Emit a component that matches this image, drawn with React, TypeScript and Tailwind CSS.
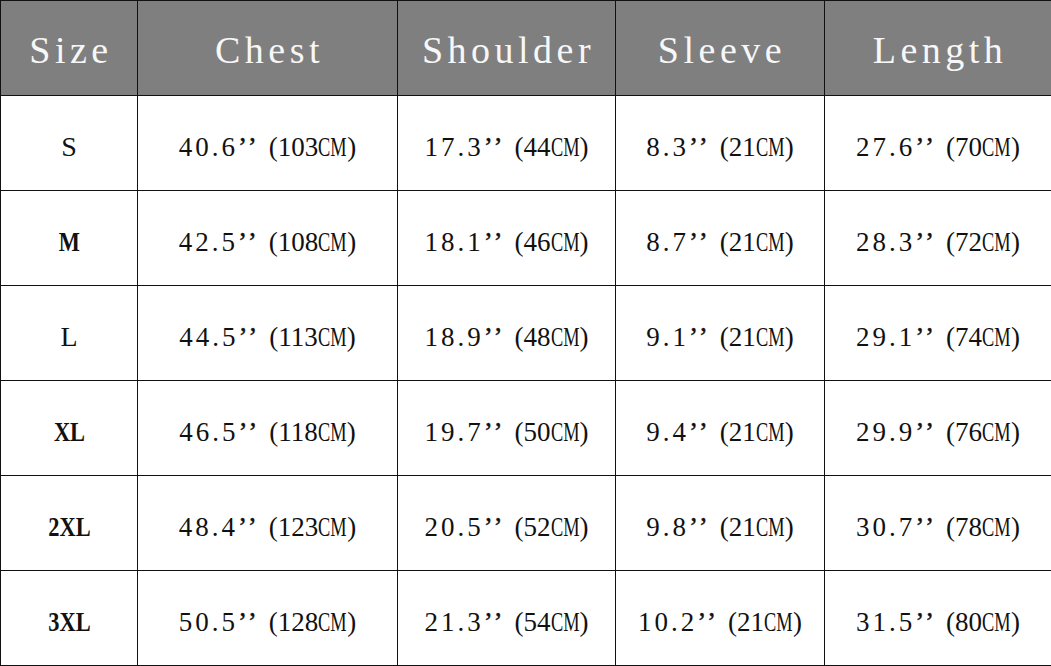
import React from 'react';

type Row = {
  size: string;
  bold: boolean;
  chest: [string, string];
  shoulder: [string, string];
  sleeve: [string, string];
  length: [string, string];
};

const ROWS: Row[] = [
  { size: 'S', bold: false, chest: ['40.6', '103'], shoulder: ['17.3', '44'], sleeve: ['8.3', '21'], length: ['27.6', '70'] },
  { size: 'M', bold: true, chest: ['42.5', '108'], shoulder: ['18.1', '46'], sleeve: ['8.7', '21'], length: ['28.3', '72'] },
  { size: 'L', bold: false, chest: ['44.5', '113'], shoulder: ['18.9', '48'], sleeve: ['9.1', '21'], length: ['29.1', '74'] },
  { size: 'XL', bold: true, chest: ['46.5', '118'], shoulder: ['19.7', '50'], sleeve: ['9.4', '21'], length: ['29.9', '76'] },
  { size: '2XL', bold: true, chest: ['48.4', '123'], shoulder: ['20.5', '52'], sleeve: ['9.8', '21'], length: ['30.7', '78'] },
  { size: '3XL', bold: true, chest: ['50.5', '128'], shoulder: ['21.3', '54'], sleeve: ['10.2', '21'], length: ['31.5', '80'] },
];

const HEADERS = ['Size', 'Chest', 'Shoulder', 'Sleeve', 'Length'];

// valeur "40.6’’(103CM)" façon police chinoise à chasse fixe
function Measure({ value }: { value: [string, string] }) {
  const [inch, cm] = value;
  return (
    <span className="whitespace-nowrap">
      <span className="tracking-[3px]">{inch}</span>
      <span className="tracking-[3px] [-webkit-text-stroke:0.4px]">’’</span>
      <span className="ml-[9px]">({cm}</span>
      <span className="inline-block w-[29px] origin-left scale-x-[0.68] text-left">CM</span>
      <span>)</span>
    </span>
  );
}

export default function App() {
  return (
    <div className="w-[1051px] h-[666px] bg-white" style={{ fontFamily: '"Liberation Serif", "Times New Roman", serif' }}>
      <table className="w-[1051px] table-fixed border-collapse">
        <colgroup>
          <col className="w-[137px]" />
          <col className="w-[260px]" />
          <col className="w-[218px]" />
          <col className="w-[209px]" />
          <col className="w-[227px]" />
        </colgroup>
        <thead>
          <tr className="h-[95px] bg-[#7f7f7f]">
            {HEADERS.map((h) => (
              <th
                key={h}
                className="border border-[#111] p-0 pt-[4px] pl-[4px] text-center align-middle text-[38px] font-normal tracking-[4.5px] text-[#f7f7f7]"
              >
                {h}
              </th>
            ))}
          </tr>
        </thead>
        <tbody>
          {ROWS.map((r) => (
            <tr key={r.size} className="h-[95px]">
              <td className="border border-[#111] p-0 pt-[8px] text-center align-middle text-[28px] text-[#111]">
                {r.bold ? (
                  <span className="inline-block scale-x-[0.8] font-bold">{r.size}</span>
                ) : (
                  r.size
                )}
              </td>
              <td className="border border-[#111] p-0 pt-[8px] text-center align-middle text-[27px] text-[#111]">
                <Measure value={r.chest} />
              </td>
              <td className="border border-[#111] p-0 pt-[8px] text-center align-middle text-[27px] text-[#111]">
                <Measure value={r.shoulder} />
              </td>
              <td className="border border-[#111] p-0 pt-[8px] text-center align-middle text-[27px] text-[#111]">
                <Measure value={r.sleeve} />
              </td>
              <td className="border border-[#111] p-0 pt-[8px] text-center align-middle text-[27px] text-[#111]">
                <Measure value={r.length} />
              </td>
            </tr>
          ))}
        </tbody>
      </table>
    </div>
  );
}
